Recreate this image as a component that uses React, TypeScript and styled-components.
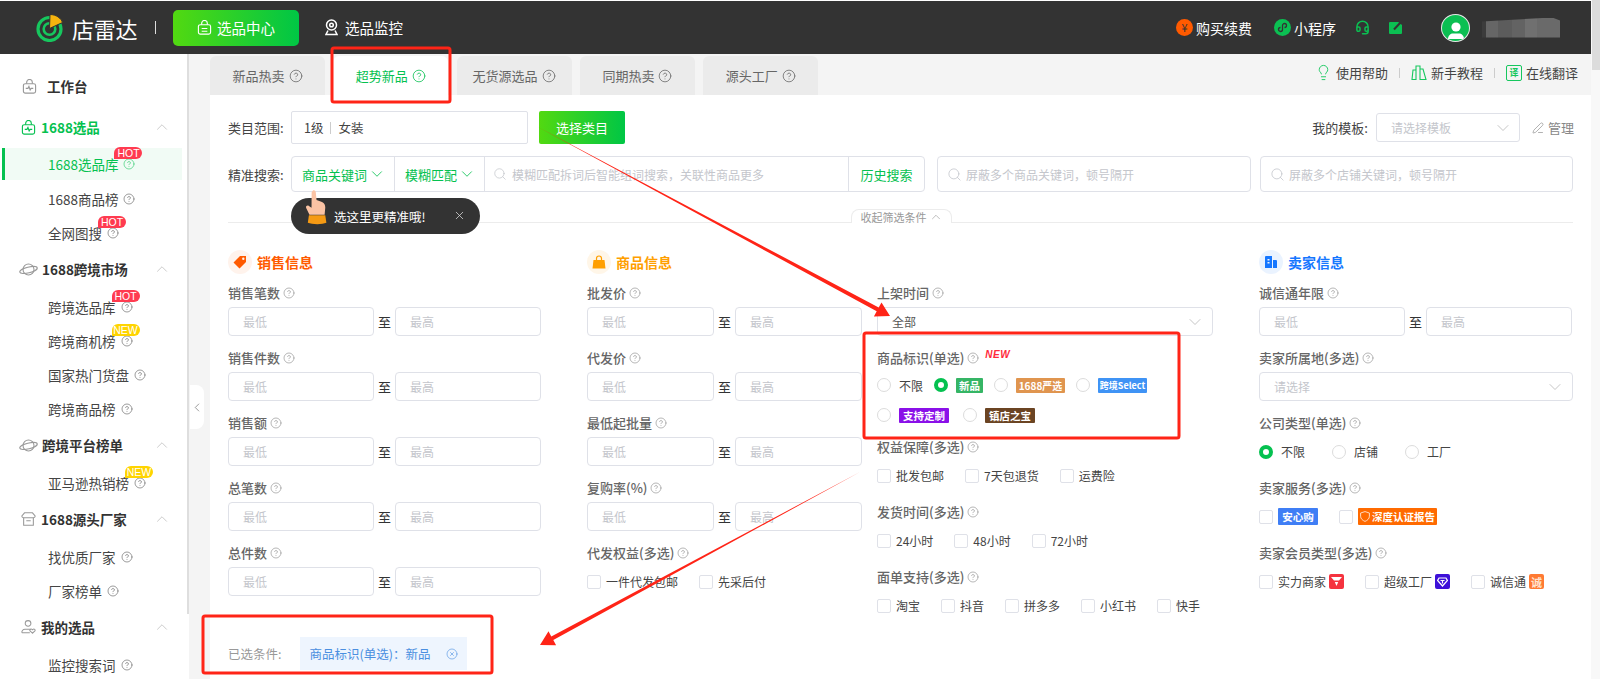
import React from "react";
import styled, { createGlobalStyle } from "styled-components";
import {
  ChevronDown,
  ChevronLeft,
  ChevronUp,
  CircleHelp,
  CircleX,
  Headset,
  Lightbulb,
  PenLine,
  Search,
  X,
} from "lucide-react";

const GREEN = "#05c150";
const COMMA = "\uFF0C";
const COLON = "\uFF1A";

const GlobalStyle = createGlobalStyle`
  html, body {
    margin: 0;
    padding: 0;
    height: 679px;
    overflow: hidden;
    background: #fff;
  }
  * {
    box-sizing: border-box;
  }
  body {
    font-family: "Noto Sans CJK SC", "Liberation Sans", sans-serif;
    font-size: 13px;
    color: #333;
  }
`;

const Page = styled.div`
  position: relative;
  width: 1600px;
  height: 679px;
  overflow: hidden;
  padding-top: 1px;
  background: #fff;
`;

const PageScrollbar = styled.div`
  position: absolute;
  top: 0;
  right: 0;
  width: 9px;
  height: 679px;
  background: #f8f8f8;
  &::after {
    content: "";
    display: block;
    width: 8px;
    height: 70px;
    margin-left: 1px;
    background: #dcdcdc;
  }
`;

/* top bar */
const TopBar = styled.header`
  display: flex;
  align-items: center;
  width: 1591px;
  height: 53px;
  padding-left: 36px;
  background: #333;
  color: #fff;
`;
const LogoText = styled.span`
  margin-left: 8px;
  font-size: 22px;
  line-height: 28px;
  letter-spacing: -0.3px;
`;
const LogoDivider = styled.i`
  width: 1px;
  height: 13px;
  margin: 0 17px 0 18px;
  background: #ddd;
`;
const CenterButton = styled.div`
  display: flex;
  align-items: center;
  justify-content: center;
  gap: 5px;
  width: 126px;
  height: 36px;
  border-radius: 5px;
  background: linear-gradient(90deg, #52d911, #00c645);
  font-size: 14.5px;
`;
const MonitorLink = styled.div`
  display: flex;
  align-items: center;
  gap: 7px;
  margin-left: 26px;
  font-size: 14.5px;
`;
const TopRight = styled.div`
  display: flex;
  align-items: center;
  margin-left: auto;
  padding-right: 31px;
`;
const TopLink = styled.div<{ $gap: number }>`
  display: flex;
  align-items: center;
  gap: 3px;
  margin-right: ${(p) => p.$gap}px;
  font-size: 14px;
`;
const RoundIcon = styled.span<{ $bg: string }>`
  display: flex;
  align-items: center;
  justify-content: center;
  width: 17px;
  height: 17px;
  border-radius: 50%;
  background: ${(p) => p.$bg};
  color: #333;
  font-size: 11px;
  line-height: 17px;
`;
const Avatar = styled.span`
  display: flex;
  align-items: flex-end;
  justify-content: center;
  width: 29px;
  height: 28px;
  overflow: hidden;
  border: 1px solid #e8e8e8;
  border-radius: 50%;
  background: #0bbf52;
`;
const BlurredName = styled.div`
  width: 78px;
  height: 20px;
  margin-left: 12px;
  background: linear-gradient(
    90deg,
    #3c3c3c 0 5%,
    #666 5% 20%,
    #5c5c5c 20% 38%,
    #636363 38% 55%,
    #707070 55% 70%,
    #6a6a6a 70% 100%
  );
  clip-path: polygon(0 20%, 90% 0, 100% 15%, 100% 100%, 0 100%);
`;

/* sidebar */
const Body = styled.div`
  display: flex;
  height: 626px;
`;
const Sidebar = styled.aside`
  position: relative;
  flex: 0 0 189px;
  padding: 15px 7px 0 2px;
  background: #fff;
`;
const SideThumb = styled.div`
  position: absolute;
  top: 0;
  right: 0;
  width: 2px;
  height: 560px;
  background: #dedede;
`;
const GroupRow = styled.div<{ $active?: boolean; $top?: number }>`
  display: flex;
  align-items: center;
  height: 34px;
  margin-top: ${(p) => p.$top ?? 2}px;
  padding: 0 11px 0 17px;
  color: ${(p) => (p.$active ? GREEN : "#333")};
  font-size: 13.5px;
  font-weight: 700;
  svg.lead {
    flex: 0 0 auto;
    margin-right: 4px;
  }
  svg.narrow {
    margin: 0 5px 0 2px;
  }
  svg.fold {
    margin-left: auto;
    color: #bbb;
  }
`;
const HomeRow = styled(GroupRow)`
  margin-top: 0;
  padding-left: 20px;
  svg.lead {
    margin-right: 10px;
  }
`;
const ItemList = styled.div`
  margin-top: 4px;
`;
const ItemRow = styled.div<{ $active?: boolean }>`
  display: flex;
  align-items: center;
  height: 34px;
  padding-left: 46px;
  border-left: ${(p) => (p.$active ? `3px solid ${GREEN}` : "0")};
  margin-left: 0;
  background: ${(p) => (p.$active ? "#f1fbf5" : "transparent")};
  color: ${(p) => (p.$active ? GREEN : "#444")};
  font-size: 13.5px;
  ${(p) => p.$active && "padding-left: 43px; height: 32px; margin-bottom: 2px;"}
`;
const ItemLabel = styled.span`
  position: relative;
  display: inline-flex;
  align-items: center;
  gap: 5px;
  height: 18px;
  line-height: 18px;
`;
const Corner = styled.b<{ $bg: string }>`
  position: absolute;
  top: -8px;
  right: -7px;
  width: 28px;
  height: 12px;
  border-radius: 7px 7px 7px 0;
  background: ${(p) => p.$bg};
  color: #fff;
  font-family: "Liberation Sans", sans-serif;
  font-size: 10.5px;
  font-weight: 400;
  line-height: 12px;
  text-align: center;
`;
const CollapseHandle = styled.div`
  position: absolute;
  top: 385px;
  left: 190px;
  display: flex;
  align-items: center;
  justify-content: center;
  width: 14px;
  height: 44px;
  border-radius: 0 8px 8px 0;
  background: #fff;
  color: #555;
`;

/* main */
const Main = styled.main`
  flex: 1;
  width: 1402px;
  margin-right: 9px;
  padding-top: 2px;
  background: #f4f4f4;
`;
const TabBar = styled.div`
  display: flex;
  align-items: flex-end;
  gap: 8.3px;
  height: 39px;
  padding-left: 21px;
`;
const Tab = styled.div<{ $active?: boolean }>`
  display: flex;
  align-items: center;
  justify-content: center;
  gap: 4px;
  width: 115px;
  height: 39px;
  border-radius: 6px 6px 0 0;
  background: ${(p) => (p.$active ? "#fff" : "#ebebeb")};
  color: ${(p) => (p.$active ? GREEN : "#666")};
  font-size: 13px;
`;
const HelpLinks = styled.div`
  display: flex;
  align-items: center;
  margin-left: auto;
  height: 39px;
  padding: 0 13px 6px 0;
  color: #444;
  font-size: 13px;
`;
const HelpLink = styled.span`
  display: flex;
  align-items: center;
  gap: 4px;
`;
const HelpSep = styled.i`
  width: 1px;
  height: 10px;
  margin: 0 11px;
  background: #ccc;
`;
const TransBox = styled.span`
  display: flex;
  align-items: center;
  justify-content: center;
  width: 16px;
  height: 16px;
  border: 1px solid #16c75e;
  border-radius: 2px;
  color: #16c75e;
  font-size: 9px;
  font-weight: 700;
`;
const Panel = styled.section`
  position: relative;
  height: 585px;
  margin-left: 21px;
  padding: 16px 18px 0;
  background: #fff;
`;
const CategoryRow = styled.div`
  display: flex;
  align-items: center;
  height: 33px;
`;
const RowLabel = styled.span`
  flex: 0 0 63px;
  color: #444;
  font-size: 13px;
`;
const CategoryBox = styled.div`
  display: flex;
  align-items: center;
  width: 237px;
  height: 33px;
  padding-left: 12px;
  border: 1px solid #dfe1e8;
  border-radius: 2px;
  color: #444;
  font-size: 12.5px;
  i {
    width: 1px;
    height: 12px;
    margin: 0 7px;
    background: #ccc;
  }
`;
const PickButton = styled.div`
  display: flex;
  align-items: center;
  justify-content: center;
  width: 86px;
  height: 33px;
  margin-left: 11px;
  border-radius: 2px;
  background: linear-gradient(90deg, #52d911, #00c645);
  color: #fff;
  font-size: 13px;
`;
const TemplateArea = styled.div`
  display: flex;
  align-items: center;
  margin-left: auto;
  color: #444;
  font-size: 13px;
`;
const TemplateSelect = styled.div`
  display: flex;
  align-items: center;
  justify-content: space-between;
  width: 144px;
  height: 29px;
  margin-left: 8px;
  padding: 0 6px 0 14px;
  border: 1px solid #dfe1e8;
  border-radius: 3px;
  color: #c4c6cc;
  font-size: 12px;
`;
const Manage = styled.span`
  display: flex;
  align-items: center;
  gap: 4px;
  margin: 0 -1px 0 12px;
  color: #888;
`;
const SearchRow = styled.div`
  display: flex;
  align-items: center;
  height: 36px;
  margin-top: 12px;
`;
const SearchGroup = styled.div`
  display: flex;
  width: 634px;
  height: 36px;
  border: 1px solid #dfe1e8;
  border-radius: 4px;
`;
const MatchCell = styled.div<{ $width: number }>`
  display: flex;
  align-items: center;
  gap: 1px;
  flex: 0 0 ${(p) => p.$width}px;
  padding-left: 10px;
  border-right: 1px solid #dfe1e8;
  color: ${GREEN};
  font-size: 13px;
`;
const SearchText = styled.div`
  display: flex;
  align-items: center;
  gap: 5px;
  flex: 1;
  padding-left: 8px;
  color: #c4c6cc;
  font-size: 12px;
  white-space: nowrap;
`;
const HistoryCell = styled.div`
  display: flex;
  align-items: center;
  justify-content: center;
  flex: 0 0 76px;
  border-left: 1px solid #dfe1e8;
  color: ${GREEN};
  font-size: 13px;
`;
const BlockBox = styled.div<{ $left: number; $width: number }>`
  display: flex;
  align-items: center;
  gap: 4px;
  width: ${(p) => p.$width}px;
  height: 36px;
  margin-left: ${(p) => p.$left}px;
  padding-left: 9px;
  border: 1px solid #dfe1e8;
  border-radius: 4px;
  color: #c4c6cc;
  font-size: 12px;
`;
const Tip = styled.div`
  position: absolute;
  z-index: 1;
  top: 103px;
  left: 81px;
  display: flex;
  align-items: center;
  width: 189px;
  height: 36px;
  padding-left: 43px;
  border-radius: 18px;
  background: #333;
  color: #fff;
  font-size: 12.5px;
  svg.hand {
    position: absolute;
    top: -9px;
    left: 13px;
  }
  svg.close {
    position: absolute;
    top: 11px;
    right: 14px;
    color: #ddd;
  }
`;
const Divider = styled.div`
  position: relative;
  height: 1px;
  margin-top: 30px;
  background: #ececec;
`;
const FoldTab = styled.div`
  position: absolute;
  top: -13px;
  left: 623px;
  display: flex;
  align-items: center;
  justify-content: center;
  gap: 2px;
  width: 101px;
  height: 14px;
  border: 1px solid #ececec;
  border-bottom: 0;
  border-radius: 8px 8px 0 0;
  background: #fff;
  color: #999;
  font-size: 11px;
  line-height: 14px;
`;
const Columns = styled.div`
  display: grid;
  grid-template-columns: 359px 290px 382px 314px;
  margin-top: 27px;
`;
const SectionHead = styled.div<{ $color: string; $tint: string }>`
  display: flex;
  align-items: center;
  gap: 5px;
  height: 24px;
  margin-bottom: 9px;
  color: ${(p) => p.$color};
  font-size: 14px;
  font-weight: 700;
  > span {
    display: flex;
    align-items: center;
    justify-content: center;
    width: 24px;
    height: 24px;
    border-radius: 50%;
    background: ${(p) => p.$tint};
  }
`;
const SpacerHead = styled.div`
  height: 33px;
`;
const Field = styled.div<{ $bottom?: number }>`
  margin-bottom: ${(p) => p.$bottom ?? 12}px;
`;
const FieldLabel = styled.div`
  display: flex;
  align-items: center;
  gap: 3px;
  height: 20px;
  margin-bottom: 4px;
  color: #666;
  font-size: 13px;
  font-weight: 500;
  line-height: 20px;
  svg {
    color: #777;
  }
  em {
    margin: -6px 0 0 3px;
    color: #ff2a3c;
    font-family: "Liberation Sans", sans-serif;
    font-size: 10px;
    font-style: italic;
    font-weight: 700;
    letter-spacing: 0.5px;
  }
`;
const Range = styled.div`
  display: flex;
  align-items: center;
`;
const RangeInput = styled.input`
  width: ${(p) => p.width}px;
  height: 29px;
  padding: 0 14px;
  border: 1px solid #dfe1e8;
  border-radius: 4px;
  outline: none;
  font-family: inherit;
  font-size: 12px;
  &::placeholder {
    color: #c4c6cc;
  }
`;
const RangeTo = styled.span`
  flex: 0 0 21px;
  color: #333;
  font-size: 13px;
  text-align: center;
`;
const SelectBox = styled.div<{ $width: number; $muted?: boolean }>`
  display: flex;
  align-items: center;
  justify-content: space-between;
  width: ${(p) => p.$width}px;
  height: 29px;
  padding: 0 7px 0 14px;
  border: 1px solid #dfe1e8;
  border-radius: 4px;
  color: ${(p) => (p.$muted ? "#c4c6cc" : "#555")};
  font-size: 12px;
  svg {
    color: #bbb;
  }
`;
const Options = styled.div<{ $gap?: number; $height?: number; $top?: number }>`
  display: flex;
  align-items: center;
  gap: ${(p) => p.$gap ?? 21}px;
  height: ${(p) => p.$height ?? 29}px;
  margin-top: ${(p) => p.$top ?? 0}px;
`;
const Option = styled.span`
  display: inline-flex;
  align-items: center;
  gap: 5px;
  color: #444;
  font-size: 12px;
  white-space: nowrap;
`;
const RadioOption = styled(Option)`
  gap: 8px;
`;
const Box = styled.i`
  flex: 0 0 14px;
  width: 14px;
  height: 14px;
  border: 1px solid #dfe1e8;
  border-radius: 2px;
`;
const Radio = styled.i<{ $on?: boolean }>`
  flex: 0 0 14px;
  width: 14px;
  height: 14px;
  border: ${(p) => (p.$on ? `4px solid ${GREEN}` : "1px solid #dcdcdc")};
  border-radius: 50%;
  background: #fff;
`;
const Badge = styled.b<{ $bg: string; $width: number; $height?: number; $size?: number }>`
  display: inline-flex;
  align-items: center;
  justify-content: center;
  gap: 2px;
  width: ${(p) => p.$width}px;
  height: ${(p) => p.$height ?? 15}px;
  border-radius: 1px;
  background: ${(p) => p.$bg};
  color: #fff;
  font-size: ${(p) => p.$size ?? 10.5}px;
  font-weight: 700;
  white-space: nowrap;
`;
const Tile = styled.span<{ $bg: string }>`
  display: flex;
  align-items: center;
  justify-content: center;
  width: 15px;
  height: 15px;
  margin-left: -2px;
  border-radius: 2px;
  background: ${(p) => p.$bg};
  color: #ffe3cf;
  font-size: 11px;
  font-weight: 700;
`;
const SelectedRow = styled.div`
  display: flex;
  align-items: center;
  margin-top: 5px;
  color: #999;
  font-size: 12.5px;
`;
const SelectedLabel = styled.span`
  flex: 0 0 53px;
  white-space: nowrap;
`;
const Chip = styled.div`
  display: flex;
  align-items: center;
  justify-content: space-between;
  width: 167px;
  height: 33px;
  margin-left: 19px;
  padding: 0 9px;
  background: #eef5fe;
  color: #4a8fe0;
  font-size: 12.5px;
  white-space: nowrap;
  svg {
    flex: 0 0 auto;
  }
`;
const Annotations = styled.svg`
  position: absolute;
  z-index: 2;
  top: 0;
  left: 0;
  pointer-events: none;
`;

const Help = ({ size = 12, opacity = 0.75 }: { size?: number; opacity?: number }) => (
  <CircleHelp size={size} strokeWidth={1.4} color="currentColor" style={{ opacity }} />
);

const Logo = () => (
  <svg width="28" height="28" viewBox="0 0 28 28">
    <circle cx="13.5" cy="15" r="11.5" fill="none" stroke="#16c75e" strokeWidth="3.2" />
    <circle cx="13.5" cy="15" r="5.8" fill="none" stroke="#16c75e" strokeWidth="2.6" />
    <path d="M13.5 14.5 L14 0.5 C20 0.5 25 4 26.5 8.5 Z" fill="#f6b40e" stroke="#333" strokeWidth="1" />
  </svg>
);

const BagIcon = ({ color, pulse = true, narrow }: { color: string; pulse?: boolean; narrow?: boolean }) => (
  <svg
    className={narrow ? "lead narrow" : "lead"}
    width="15"
    height="15"
    viewBox="0 0 16 16"
    fill="none"
    stroke={color}
    strokeWidth="1.2"
  >
    <path d="M5 5V3.5a3 3 0 0 1 6 0V5" />
    <rect x="1.5" y="5" width="13" height="10" rx="2" />
    {pulse ? <path d="M4 10h2.4l1-2 1.3 3.6 1-1.6H12" /> : <path d="M5 9h6M5 12h6" />}
  </svg>
);

const PlanetIcon = () => (
  <svg className="lead" width="19" height="15" viewBox="0 0 19 15" fill="none" stroke="#999" strokeWidth="1.1">
    <circle cx="9.5" cy="7.5" r="5.5" />
    <ellipse cx="9.5" cy="8" rx="9" ry="2.8" transform="rotate(-14 9.5 8)" />
  </svg>
);

const StoreIcon = () => (
  <svg className="lead narrow" width="15" height="16" viewBox="0 0 17 16" fill="none" stroke="#999" strokeWidth="1.2">
    <path d="M4 1h9l3 3.5a2 2 0 0 1-2 2H3a2 2 0 0 1-2-2Z" />
    <path d="M3 6.5V15h11V6.5M6 10h5" />
  </svg>
);

const UserIcon = () => (
  <svg className="lead narrow" width="15" height="16" viewBox="0 0 17 16" fill="none" stroke="#999" strokeWidth="1.2">
    <circle cx="8" cy="4" r="3.2" />
    <path d="M1 14.5a3.5 3.5 0 0 1 3.5-4H11M1 14.5h9" />
    <path d="M13 15l-2.5-2.3a1.4 1.4 0 0 1 2-2l.5.5.5-.5a1.4 1.4 0 0 1 2 2Z" />
  </svg>
);

const Hand = () => (
  <svg className="hand" width="24" height="36" viewBox="0 0 22 33">
    <path d="M8 1.5c1.3-1 2.6 0 2.8 1.5l.7 7 5 2c2.2 1 3 2.6 3 5l-.6 6.5H5L2 17.5c-.8-1.6 1-3 2.5-2l2.4 1.6L7 3Z" fill="#fbc3a4" />
    <path d="M4.5 24h15l1 7c-3.5 1.6-13 1.6-17 0Z" fill="#f59a14" />
  </svg>
);

const PageAnnotations = () => (
  <Annotations width="1600" height="679" viewBox="0 0 1600 679">
    <g fill="none" stroke="#ff2417" strokeWidth="3">
      <rect x="332" y="48" width="118" height="54" rx="2" />
      <rect x="864" y="333" width="315" height="105" rx="2" />
      <rect x="203" y="616" width="289" height="57" rx="2" />
    </g>
    <g fill="#ff2417">
      <polygon points="538,127 878.7,307.5 881.5,302.4 890,316 873.9,316.4 876.7,311.3" />
      <polygon points="860,472 553.3,640.1 556.1,645.3 540,645 548.5,631.3 551.3,636.5" />
    </g>
  </Annotations>
);

const sideGroups = [
  {
    title: "1688跨境市场",
    icon: <PlanetIcon />,
    items: [
      { name: "跨境选品库", tag: "HOT" },
      { name: "跨境商机榜", tag: "NEW" },
      { name: "国家热门货盘" },
      { name: "跨境商品榜" },
    ],
  },
  { title: "跨境平台榜单", icon: <PlanetIcon />, items: [{ name: "亚马逊热销榜", tag: "NEW" }] },
  { title: "1688源头厂家", icon: <StoreIcon />, items: [{ name: "找优质厂家" }, { name: "厂家榜单" }] },
  { title: "我的选品", icon: <UserIcon />, items: [{ name: "监控搜索词" }] },
];

const SideItem = ({ name, tag, active }: { name: string; tag?: string; active?: boolean }) => (
  <ItemRow $active={active}>
    <ItemLabel>
      {name}
      <Help />
      {tag && <Corner $bg={tag === "HOT" ? "#ff3b50" : "#ffd400"}>{tag}</Corner>}
    </ItemLabel>
  </ItemRow>
);

const LabelText = ({ text, extra }: { text: string; extra?: string }) => (
  <FieldLabel>
    {text}
    <Help />
    {extra && <em>{extra}</em>}
  </FieldLabel>
);

const RangeField = ({ label, inputWidth }: { label: string; inputWidth: number }) => (
  <Field>
    <LabelText text={label} />
    <Range>
      <RangeInput width={inputWidth} placeholder="最低" readOnly />
      <RangeTo>至</RangeTo>
      <RangeInput width={inputWidth} placeholder="最高" readOnly />
    </Range>
  </Field>
);

const CheckField = ({ label, options }: { label: string; options: string[] }) => (
  <Field>
    <LabelText text={label} />
    <Options>
      {options.map((o) => (
        <Option key={o}>
          <Box />
          {o}
        </Option>
      ))}
    </Options>
  </Field>
);

export default function App() {
  return (
    <Page>
      <GlobalStyle />
      <TopBar>
        <Logo />
        <LogoText>店雷达</LogoText>
        <LogoDivider />
        <CenterButton>
          <BagIcon color="#fff" pulse={false} />
          选品中心
        </CenterButton>
        <MonitorLink>
          <svg width="13" height="17" viewBox="0 0 13 17" fill="none" stroke="#fff" strokeWidth="1.5">
            <circle cx="6.5" cy="6" r="5" />
            <circle cx="6.5" cy="6" r="1.8" />
            <path d="M3 11.5 1 15.5h11l-2-4" />
          </svg>
          选品监控
        </MonitorLink>
        <TopRight>
          <TopLink $gap={22}>
            <RoundIcon $bg="#ff5a00">¥</RoundIcon>
            购买续费
          </TopLink>
          <TopLink $gap={19}>
            <RoundIcon $bg="#0bbf52">
              <svg width="11" height="11" viewBox="0 0 11 11" fill="none" stroke="#333" strokeWidth="1.3">
                <path d="M5.5 3.5v4a2 2 0 1 1-2-2M5.5 7.5v-4a2 2 0 1 1 2 2" />
              </svg>
            </RoundIcon>
            小程序
          </TopLink>
          <TopLink $gap={19}>
            <Headset size={15} color="#0bbf52" strokeWidth={2.4} />
          </TopLink>
          <TopLink $gap={39}>
            <svg width="13" height="13" viewBox="0 0 13 13">
              <rect x="0" y="1" width="13" height="12" rx="1" fill="#0bbf52" />
              <path d="M5 8.500 11.500 1.500" stroke="#333" strokeWidth="2" />
              <path d="M8 0h5v4" fill="#333" />
            </svg>
          </TopLink>
          <Avatar>
            <svg width="20" height="22" viewBox="0 0 20 22" fill="#fff">
              <circle cx="10" cy="8" r="4.6" />
              <path d="M2 20c0-3.6 2.6-5.6 5-5.6h6c2.4 0 5 2 5 5.6Z" />
            </svg>
          </Avatar>
          <BlurredName />
        </TopRight>
      </TopBar>
      <Body>
        <Sidebar>
          <SideThumb />
          <HomeRow>
            <BagIcon color="#999" />
            工作台
          </HomeRow>
          <GroupRow $active $top={7}>
            <BagIcon color={GREEN} narrow />
            1688选品
            <ChevronUp className="fold" size={18} strokeWidth={1} />
          </GroupRow>
          <ItemList>
            <SideItem name="1688选品库" tag="HOT" active />
            <SideItem name="1688商品榜" />
            <SideItem name="全网图搜" tag="HOT" />
          </ItemList>
          {sideGroups.map((g) => (
            <React.Fragment key={g.title}>
              <GroupRow>
                {g.icon}
                {g.title}
                <ChevronUp className="fold" size={18} strokeWidth={1} />
              </GroupRow>
              <ItemList>
                {g.items.map((i) => (
                  <SideItem key={i.name} name={i.name} tag={(i as { tag?: string }).tag} />
                ))}
              </ItemList>
            </React.Fragment>
          ))}
        </Sidebar>
        <CollapseHandle>
          <ChevronLeft size={25} strokeWidth={1} />
        </CollapseHandle>
        <Main>
          <TabBar>
            <Tab>
              新品热卖 <Help size={14} opacity={0.95} />
            </Tab>
            <Tab $active>
              超势新品 <Help size={14} opacity={0.95} />
            </Tab>
            <Tab>
              无货源选品 <Help size={14} opacity={0.95} />
            </Tab>
            <Tab>
              同期热卖 <Help size={14} opacity={0.95} />
            </Tab>
            <Tab>
              源头工厂 <Help size={14} opacity={0.95} />
            </Tab>
            <HelpLinks>
              <HelpLink>
                <Lightbulb size={17} color="#16c75e" strokeWidth={1.3} />
                使用帮助
              </HelpLink>
              <HelpSep />
              <HelpLink>
                <svg width="16" height="15" viewBox="0 0 16 15" fill="none" stroke="#16c75e" strokeWidth="1.1">
                  <path d="M1 14.5 2 5h3v9.5H1ZM5 14.5V1h4v13.5M9 14.5V4h3l3 10.5Z" />
                </svg>
                新手教程
              </HelpLink>
              <HelpSep />
              <HelpLink>
                <TransBox>译</TransBox>
                在线翻译
              </HelpLink>
            </HelpLinks>
          </TabBar>
          <Panel>
            <CategoryRow>
              <RowLabel>类目范围:</RowLabel>
              <CategoryBox>
                1级<i />女装
              </CategoryBox>
              <PickButton>选择类目</PickButton>
              <TemplateArea>
                我的模板:
                <TemplateSelect>
                  请选择模板
                  <ChevronDown size={20} strokeWidth={1} color="#bbb" />
                </TemplateSelect>
                <Manage>
                  <PenLine size={12} strokeWidth={1.3} />
                  管理
                </Manage>
              </TemplateArea>
            </CategoryRow>
            <SearchRow>
              <RowLabel>精准搜索:</RowLabel>
              <SearchGroup>
                <MatchCell $width={103}>
                  商品关键词
                  <ChevronDown size={18} strokeWidth={1.1} />
                </MatchCell>
                <MatchCell $width={90}>
                  模糊匹配
                  <ChevronDown size={18} strokeWidth={1.1} />
                </MatchCell>
                <SearchText>
                  <Search size={14} strokeWidth={1.3} />
                  {`模糊匹配拆词后智能组词搜索${COMMA}关联性商品更多`}
                </SearchText>
                <HistoryCell>历史搜索</HistoryCell>
              </SearchGroup>
              <BlockBox $left={12} $width={314}>
                <Search size={15} strokeWidth={1.3} />
                {`屏蔽多个商品关键词${COMMA}顿号隔开`}
              </BlockBox>
              <BlockBox $left={9} $width={313}>
                <Search size={15} strokeWidth={1.3} />
                {`屏蔽多个店铺关键词${COMMA}顿号隔开`}
              </BlockBox>
            </SearchRow>
            <Tip>
              <Hand />
              选这里更精准哦!
              <X className="close" size={13} strokeWidth={1.4} />
            </Tip>
            <Divider>
              <FoldTab>
                收起筛选条件
                <ChevronUp size={14} strokeWidth={1.1} />
              </FoldTab>
            </Divider>
            <Columns>
              <div>
                <SectionHead $color="#ff5a00" $tint="#fff3ec">
                  <span>
                    <svg width="14" height="14" viewBox="0 0 14 14" fill="#ff5a00">
                      <path d="M7 1h6v6l-6.5 6.5L.5 7.5ZM10.3 2.5a1.2 1.2 0 1 0 0 2.4 1.2 1.2 0 0 0 0-2.4Z" fillRule="evenodd" />
                    </svg>
                  </span>
                  销售信息
                </SectionHead>
                {["销售笔数", "销售件数", "销售额", "总笔数", "总件数"].map((l) => (
                  <RangeField key={l} label={l} inputWidth={146} />
                ))}
              </div>
              <div>
                <SectionHead $color="#ff9f00" $tint="#fff6e8">
                  <span>
                    <svg width="14" height="14" viewBox="0 0 14 14" fill="#ff9f00">
                      <path d="M1.5 5h11l1 8.5H.5Z" />
                      <path d="M4.5 5V3.5a2.5 2.5 0 0 1 5 0V5" fill="none" stroke="#ff9f00" strokeWidth="1.2" />
                    </svg>
                  </span>
                  商品信息
                </SectionHead>
                {["批发价", "代发价", "最低起批量", "复购率(%)"].map((l) => (
                  <RangeField key={l} label={l} inputWidth={127} />
                ))}
                <CheckField label="代发权益(多选)" options={["一件代发包邮", "先采后付"]} />
              </div>
              <div>
                <SpacerHead />
                <Field>
                  <LabelText text="上架时间" />
                  <SelectBox $width={336}>
                    全部
                    <ChevronDown size={20} strokeWidth={1} />
                  </SelectBox>
                </Field>
                <Field $bottom={7}>
                  <LabelText text="商品标识(单选)" extra="NEW" />
                  <Options $gap={11} $height={30} $top={-2}>
                    <RadioOption>
                      <Radio />
                      不限
                    </RadioOption>
                    <RadioOption>
                      <Radio $on />
                      <Badge $bg="#35b565" $width={27}>新品</Badge>
                    </RadioOption>
                    <RadioOption>
                      <Radio />
                      <Badge $bg="#e0954f" $width={49} $size={10}>1688严选</Badge>
                    </RadioOption>
                    <RadioOption>
                      <Radio />
                      <Badge $bg="#3f93f5" $width={49} $size={9}>跨境Select</Badge>
                    </RadioOption>
                  </Options>
                  <Options $gap={14} $height={30}>
                    <RadioOption>
                      <Radio />
                      <Badge $bg="#8a10e8" $width={50}>支持定制</Badge>
                    </RadioOption>
                    <RadioOption>
                      <Radio />
                      <Badge $bg="#6b4423" $width={50}>镇店之宝</Badge>
                    </RadioOption>
                  </Options>
                </Field>
                <CheckField label="权益保障(多选)" options={["批发包邮", "7天包退货", "运费险"]} />
                <CheckField label="发货时间(多选)" options={["24小时", "48小时", "72小时"]} />
                <CheckField label="面单支持(多选)" options={["淘宝", "抖音", "拼多多", "小红书", "快手"]} />
              </div>
              <div>
                <SectionHead $color="#1677ff" $tint="#eaf3ff">
                  <span>
                    <svg width="14" height="14" viewBox="0 0 14 14" fill="#1677ff">
                      <path d="M2 1h6v12H1V2a1 1 0 0 1 1-1Z" />
                      <path d="M9 5h3a1 1 0 0 1 1 1v7H9Z" />
                      <path d="M3.5 4h2v1.5h-2ZM3.5 7h2v1.5h-2Z" fill="#eaf3ff" />
                    </svg>
                  </span>
                  卖家信息
                </SectionHead>
                <RangeField label="诚信通年限" inputWidth={146} />
                <Field>
                  <LabelText text="卖家所属地(多选)" />
                  <SelectBox $width={314} $muted>
                    请选择
                    <ChevronDown size={20} strokeWidth={1} />
                  </SelectBox>
                </Field>
                <Field>
                  <LabelText text="公司类型(单选)" />
                  <Options $gap={27}>
                    <RadioOption>
                      <Radio $on />
                      不限
                    </RadioOption>
                    <RadioOption>
                      <Radio />
                      店铺
                    </RadioOption>
                    <RadioOption>
                      <Radio />
                      工厂
                    </RadioOption>
                  </Options>
                </Field>
                <Field>
                  <LabelText text="卖家服务(多选)" />
                  <Options>
                    <Option>
                      <Box />
                      <Badge $bg="#3f7ef5" $width={40} $height={17}>安心购</Badge>
                    </Option>
                    <Option>
                      <Box />
                      <Badge $bg="#ff6a00" $width={79} $height={17}>
                        <svg width="10" height="11" viewBox="0 0 10 11" fill="none" stroke="#ffd9bf" strokeWidth="1">
                          <path d="M5 .6 9.4 2v3.2c0 2.6-2 4.2-4.4 5.2C2.600 9.400.6 7.800.6 5.200V2Z" />
                        </svg>
                        深度认证报告
                      </Badge>
                    </Option>
                  </Options>
                </Field>
                <Field>
                  <LabelText text="卖家会员类型(多选)" />
                  <Options>
                    <Option>
                      <Box />
                      实力商家
                      <Tile $bg="#f5333f">
                        <svg width="11" height="9" viewBox="0 0 11 9" fill="#fff">
                          <path d="M0 0h11L8 3.500H3ZM3.800 5h3.400L5.500 9Z" />
                        </svg>
                      </Tile>
                    </Option>
                    <Option>
                      <Box />
                      超级工厂
                      <Tile $bg="#3d10d8">
                        <svg width="11" height="10" viewBox="0 0 11 10" fill="none" stroke="#fff" strokeWidth="1.2">
                          <path d="M2 1h7l1.400 2.500L5.500 9 .6 3.500ZM3.500 3.500h4M5.500 3.500v3" />
                        </svg>
                      </Tile>
                    </Option>
                    <Option>
                      <Box />
                      诚信通
                      <Tile $bg="#ff7a33">诚</Tile>
                    </Option>
                  </Options>
                </Field>
              </div>
            </Columns>
            <SelectedRow>
              <SelectedLabel>已选条件:</SelectedLabel>
              <Chip>
                {`商品标识(单选)${COLON}新品`}
                <CircleX size={12} strokeWidth={1.2} />
              </Chip>
            </SelectedRow>
          </Panel>
        </Main>
      </Body>
      <PageScrollbar />
      <PageAnnotations />
    </Page>
  );
}
